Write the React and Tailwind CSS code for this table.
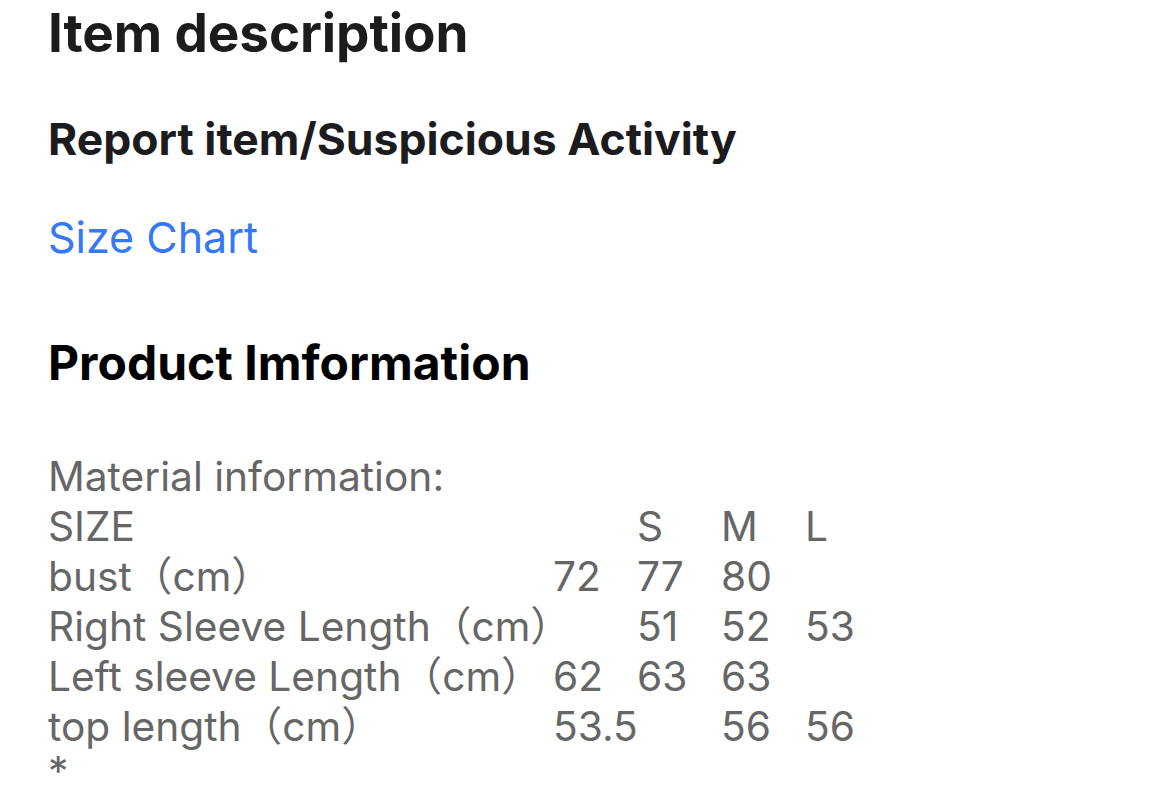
import React from 'react';

const rows = [
  ['SIZE', '', 'S', 'M', 'L'],
  ['bust（cm）', '72', '77', '80', ''],
  ['Right Sleeve Length（cm）', '', '51', '52', '53'],
  ['Left sleeve Length（cm）', '62', '63', '63', ''],
  ['top length（cm）', '53.5', '', '56', '56'],
];

const App = () => {
  return (
    <div className="w-[1170px] h-[795px] overflow-hidden bg-white pl-[48px] font-['Inter','Noto_Sans_CJK_SC',sans-serif]">
      <h1 className="mt-[3px] text-[53px] leading-[60px] font-bold text-[#1c1c1e] tracking-[-0.1px]">
        Item description
      </h1>
      <h2 className="mt-[51px] text-[44.5px] leading-[50px] font-bold text-[#1c1c1e]">
        Report item/Suspicious Activity
      </h2>
      <div className="mt-[48px] text-[43px] leading-[50px] text-[#3478f6]">Size Chart</div>
      <h2 className="mt-[73px] text-[48px] leading-[56px] font-bold text-black">
        Product Imformation
      </h2>

      {/* material table */}
      <div className="mt-[61px] text-[40.7px] leading-[50px] text-[#666666]">
        <div>Material information:</div>
        {rows.map((r, i) => (
          <div key={i} className="grid grid-cols-[505px_84px_84px_84px_84px] whitespace-nowrap">
            {r.map((c, j) => (
              <span key={j}>{c}</span>
            ))}
          </div>
        ))}
        <div className="leading-[40px]">*</div>
      </div>
    </div>
  );
};

export default App;
